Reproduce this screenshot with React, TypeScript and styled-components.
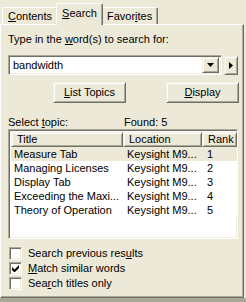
import React from "react";
import styled, { createGlobalStyle } from "styled-components";

const Global = createGlobalStyle`
  html, body { margin: 0; padding: 0; background: #ece9d8; }
  body {
    font-family: "Liberation Sans", Arial, sans-serif;
    font-size: 11px;
    color: #000;
  }
  #root { width: 246px; height: 302px; }
`;

const Root = styled.div`
  width: 246px;
  height: 302px;
  display: flex;
  flex-direction: column;
  overflow: hidden;
  background: #ece9d8;
`;

const TabStrip = styled.div`
  display: flex;
  align-items: flex-end;
  height: 24px;
  padding-left: 2px;
  position: relative;
  z-index: 1;
`;

const Tab = styled.div<{ $active?: boolean }>`
  box-sizing: border-box;
  height: ${(p) => (p.$active ? "22px" : "17px")};
  padding: ${(p) => (p.$active ? "2px 5px 0 5px" : "1px 5px 0 5px")};
  margin: ${(p) => (p.$active ? "0 -2px -1px -2px" : "0")};
  border-top: 1px solid #fff;
  border-left: 1px solid #fff;
  border-right: 1px solid #716f64;
  border-top-left-radius: 2px;
  border-top-right-radius: 2px;
  box-shadow: inset -1px 0 0 #aca899;
  background: #ece9d8;
  line-height: 14px;
  white-space: nowrap;
  position: relative;
  z-index: ${(p) => (p.$active ? 2 : 1)};
`;

const Panel = styled.div`
  box-sizing: border-box;
  width: 244px;
  height: 274px;
  border-top: 1px solid #fff;
  border-left: 1px solid #fff;
  border-right: 1px solid #716f64;
  border-bottom: 1px solid #716f64;
  box-shadow: inset -1px -1px 0 #aca899;
  padding: 8px 0 0 7px;
  display: flex;
  flex-direction: column;
`;

const BottomStrip = styled.div`
  flex: 1;
  background: #aca899;
`;

const Label = styled.div`
  line-height: 13px;
  white-space: nowrap;
`;

const ComboRow = styled.div`
  display: flex;
  align-items: center;
  gap: 2px;
  margin-top: 9px;
`;

const Sunken = styled.div`
  box-sizing: border-box;
  border-top: 1px solid #aca899;
  border-left: 1px solid #aca899;
  border-right: 1px solid #fff;
  border-bottom: 1px solid #fff;
  box-shadow: inset 1px 1px 0 #716f64, inset -1px -1px 0 #f1efe2;
  background: #fff;
`;

const Combo = styled(Sunken)`
  width: 214px;
  height: 20px;
  display: flex;
  align-items: center;
  padding: 2px;
`;

const ComboText = styled.div`
  flex: 1;
  padding-left: 2px;
  line-height: 14px;
`;

const Raised = styled.div`
  box-sizing: border-box;
  background: #ece9d8;
  border-top: 1px solid #f1efe2;
  border-left: 1px solid #f1efe2;
  border-right: 1px solid #716f64;
  border-bottom: 1px solid #716f64;
  box-shadow: inset 1px 1px 0 #fff, inset -1px -1px 0 #aca899;
  display: flex;
  align-items: center;
  justify-content: center;
`;

const DropBtn = styled(Raised)`
  width: 17px;
  height: 16px;
`;

const ArrowBtn = styled(Raised)`
  width: 14px;
  height: 19px;
`;

const ButtonRow = styled.div`
  display: flex;
  margin-top: 7px;
  padding-left: 45px;
  gap: 40px;
`;

const PushButton = styled(Raised)`
  width: 73px;
  height: 21px;
  line-height: 13px;
`;

const TopicRow = styled.div`
  display: flex;
  margin-top: 13px;
  line-height: 13px;
`;

const TopicLabel = styled.div`
  width: 116px;
`;

const List = styled(Sunken)`
  width: 230px;
  height: 110px;
  padding: 2px;
  display: flex;
  flex-direction: column;
`;

const Grid = styled.div`
  display: grid;
  grid-template-columns: 112px 79px 35px;
`;

const HeaderCell = styled(Raised)`
  justify-content: flex-start;
  height: 15px;
  padding-left: 5px;
  line-height: 13px;
`;

const Cell = styled.div<{ $sel?: boolean; $pad?: number }>`
  height: 14px;
  line-height: 14px;
  padding-left: ${(p) => p.$pad ?? 3}px;
  white-space: nowrap;
  overflow: hidden;
  background: ${(p) => (p.$sel ? "#ece9d8" : "#fff")};
`;

const Checks = styled.div`
  display: flex;
  flex-direction: column;
  margin-top: 8px;
  gap: 2px;
`;

const CheckRow = styled.div`
  display: flex;
  align-items: center;
  gap: 6px;
  height: 13px;
  line-height: 13px;
  padding-left: 1px;
`;

const CheckBox = styled(Sunken)`
  width: 13px;
  height: 13px;
  display: flex;
  align-items: center;
  justify-content: center;
`;

const U = styled.span`
  text-decoration: underline;
`;

const rows = [
  ["Measure Tab", "Keysight M9...", "1"],
  ["Managing Licenses", "Keysight M9...", "2"],
  ["Display Tab", "Keysight M9...", "3"],
  ["Exceeding the Maxi...", "Keysight M9...", "4"],
  ["Theory of Operation", "Keysight M9...", "5"],
];

export default function App() {
  return (
    <Root>
      <Global />
      <TabStrip>
        <Tab>
          <U>C</U>ontents
        </Tab>
        <Tab $active>
          <U>S</U>earch
        </Tab>
        <Tab>
          Favor<U>i</U>tes
        </Tab>
      </TabStrip>
      <Panel>
        <Label>
          Type in the <U>w</U>ord(s) to search for:
        </Label>
        <ComboRow>
          <Combo>
            <ComboText>bandwidth</ComboText>
            <DropBtn>
              <svg width="7" height="4" viewBox="0 0 7 4">
                <path d="M0 0h7L3.5 4z" fill="#000" />
              </svg>
            </DropBtn>
          </Combo>
          <ArrowBtn>
            <svg width="4" height="7" viewBox="0 0 4 7">
              <path d="M0 0v7L4 3.5z" fill="#000" />
            </svg>
          </ArrowBtn>
        </ComboRow>
        <ButtonRow>
          <PushButton>
            <span>
              <U>L</U>ist Topics
            </span>
          </PushButton>
          <PushButton>
            <span>
              <U>D</U>isplay
            </span>
          </PushButton>
        </ButtonRow>
        <TopicRow>
          <TopicLabel>
            Select <U>t</U>opic:
          </TopicLabel>
          <div>Found: 5</div>
        </TopicRow>
        <List>
          <Grid>
            <HeaderCell>Title</HeaderCell>
            <HeaderCell>Location</HeaderCell>
            <HeaderCell>Rank</HeaderCell>
            {rows.map((r, i) => (
              <React.Fragment key={i}>
                <Cell $sel={i === 0}>{r[0]}</Cell>
                <Cell $sel={i === 0} $pad={4}>{r[1]}</Cell>
                <Cell $sel={i === 0} $pad={5}>{r[2]}</Cell>
              </React.Fragment>
            ))}
          </Grid>
        </List>
        <Checks>
          <CheckRow>
            <CheckBox />
            <span>
              Search previous res<U>u</U>lts
            </span>
          </CheckRow>
          <CheckRow>
            <CheckBox>
              <svg width="7" height="7" viewBox="0 0 7 7">
                <path d="M0 2v3l2 2h1l4-4V0L2.5 4.5z" fill="#000" />
              </svg>
            </CheckBox>
            <span>
              <U>M</U>atch similar words
            </span>
          </CheckRow>
          <CheckRow>
            <CheckBox />
            <span>
              Sea<U>r</U>ch titles only
            </span>
          </CheckRow>
        </Checks>
      </Panel>
      <BottomStrip />
    </Root>
  );
}
